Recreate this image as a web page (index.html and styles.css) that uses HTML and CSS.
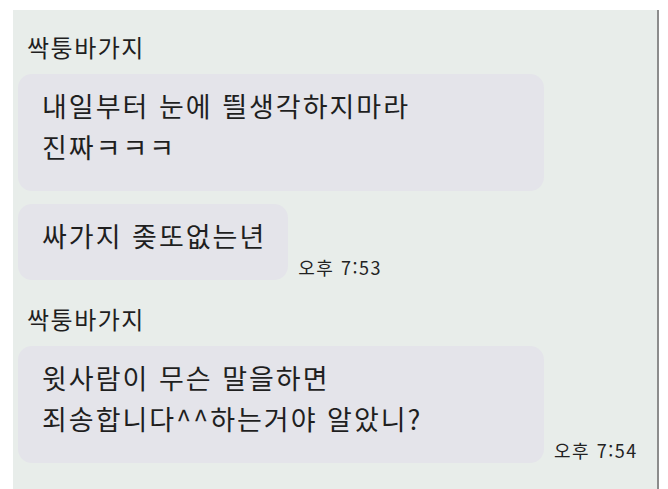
FILE: index.html
```html
<!DOCTYPE html>
<html lang="ko">
<head>
    <meta charset="utf-8">
    <title>싹퉁바가지</title>
    <link rel="stylesheet" href="styles.css">
</head>
<body>
    <div class="chat">
        <div class="name">싹퉁바가지</div>
        <div class="row">
            <div class="bubble wide">내일부터 눈에 띌생각하지마라<br>진짜ㅋㅋㅋ</div>
        </div>
        <div class="row">
            <div class="bubble">싸가지 좆또없는년</div>
            <span class="time">오후 7:53</span>
        </div>

        <div class="name second">싹퉁바가지</div>
        <div class="row">
            <div class="bubble wide">윗사람이 무슨 말을하면<br>죄송합니다^^하는거야 알았니?</div>
            <span class="time">오후 7:54</span>
        </div>
    </div>
</body>
</html>
```

FILE: styles.css
```css
body {
    margin: 0;
    background-color: #ffffff;
    font-family: "Noto Sans CJK KR", "Noto Sans", sans-serif;
    color: #1f1f1f;
}

.chat {
    margin: 10px 0 0 13px;
    width: 646px;
    height: 479px;
    box-sizing: border-box;
    padding: 22px 0 0 5px;
    background-color: #e8edea;
    border-right: 2px solid #8c8c8c;
}

.name {
    padding-left: 9px;
    font-size: 24px;
    line-height: 30px;
    letter-spacing: 1.5px;
    margin-bottom: 12px;
}

.name.second {
    margin-top: 24px;
}

.row {
    display: flex;
    align-items: flex-end;
    margin-bottom: 13px;
}

.bubble {
    padding: 11px 22px 24px 24px;
    background-color: #e4e4ea;
    border-radius: 14px;
    font-size: 27px;
    line-height: 41px;
    letter-spacing: 2px;
}

.bubble.wide {
    width: 526px;
    box-sizing: border-box;
}

.time {
    margin: 0 0 4px 10px;
    font-size: 18px;
    line-height: 18px;
    letter-spacing: 1.5px;
    color: #222222;
}
```
